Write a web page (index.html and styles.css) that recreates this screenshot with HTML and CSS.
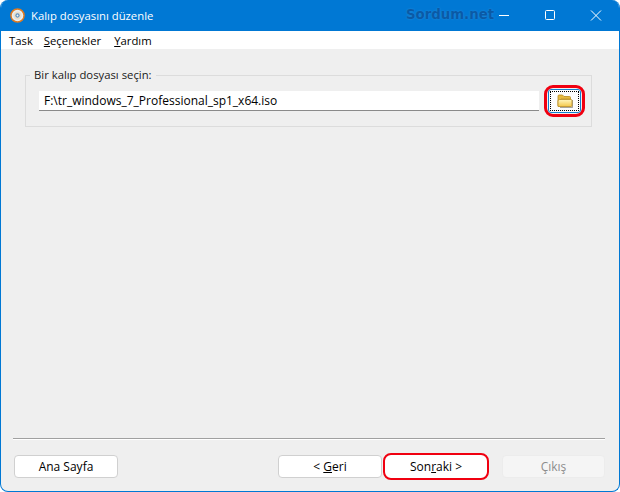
FILE: index.html
```html
<!DOCTYPE html>
<html lang="tr">
<head>
<meta charset="utf-8">
<title>Kalıp dosyasını düzenle</title>
<link rel="stylesheet" href="styles.css">
</head>
<body>
<div class="window">
  <header class="titlebar">
    <svg class="app-icon" width="15" height="15" viewBox="0 0 16 16">
      <circle cx="8" cy="8" r="7" fill="#e8f0f4" stroke="#e07a20" stroke-width="1.6"/>
      <circle cx="8" cy="8" r="4.400" fill="#eadfce"/>
      <circle cx="8" cy="8" r="2.300" fill="#5f93bf"/>
      <circle cx="8" cy="8" r="1" fill="#f3f6f8"/>
    </svg>
    <span class="title">Kalıp dosyasını düzenle</span>
    <span class="watermark">Sordum.net</span>
    <div class="controls">
      <svg class="ctl" width="46" height="31" viewBox="0 0 46 31"><path d="M18 15.500h10" stroke="#fff" fill="none"/></svg>
      <svg class="ctl" width="46" height="31" viewBox="0 0 46 31"><rect x="18.500" y="10.500" width="9" height="9" rx="1" stroke="#fff" fill="none"/></svg>
      <svg class="ctl" width="46" height="31" viewBox="0 0 46 31"><path d="M18 10.500l10 10M28 10.500l-10 10" stroke="#fff" fill="none"/></svg>
    </div>
  </header>
  <nav class="menu">
    <span class="menu-item">Task</span>
    <span class="menu-item menu-options"><u>S</u>eçenekler</span>
    <span class="menu-item"><u>Y</u>ardım</span>
  </nav>
  <main class="content">
    <fieldset class="group">
      <legend class="legend">Bir kalıp dosyası seçin:</legend>
      <div class="path-row">
        <div class="path-input">F:\tr_windows_7_Professional_sp1_x64.iso</div>
        <div class="browse-ring">
          <button class="browse" type="button" aria-label="Gözat">
            <span class="focus-dots">
              <svg width="16" height="14" viewBox="0 0 16 14">
                <defs>
                  <linearGradient id="fold" x1="0" y1="0" x2="0" y2="1">
                    <stop offset="0" stop-color="#fff6bf"/>
                    <stop offset="1" stop-color="#f4c84a"/>
                  </linearGradient>
                </defs>
                <path d="M15.500 6V13.500H3" fill="none" stroke="#6f6a5c" stroke-width="1" opacity=".6"/>
                <path d="M1 11.500V2Q1 1 2 1H5.500L7 2.500H12.500Q13.500 2.500 13.500 3.500V5H4L1 11.500Z" fill="#e6b93f" stroke="#b88a1e" stroke-width=".8"/>
                <path d="M1 12.500V7Q1 5.500 2.500 5.500H14Q15 5.500 15 6.500V11.500Q15 12.500 14 12.500Z" fill="url(#fold)" stroke="#b88a1e" stroke-width=".8"/>
              </svg>
            </span>
          </button>
        </div>
      </div>
    </fieldset>
  </main>
  <footer class="footer">
    <div class="rule"></div>
    <div class="buttons">
      <button class="btn btn-home" type="button">Ana Sayfa</button>
      <div class="btn-right">
        <button class="btn" type="button">&lt; <u>G</u>eri</button>
        <button class="btn btn-next" type="button">Son<u>r</u>aki &gt;</button>
        <button class="btn btn-exit" type="button" disabled>Çıkış</button>
      </div>
    </div>
  </footer>
</div>
</body>
</html>
```
FILE: styles.css
```css
* { box-sizing: border-box; }
html, body { margin: 0; padding: 0; background: #fff; }
body { width: 620px; height: 492px; overflow: hidden; font-family: "Open Sans", "Noto Sans", sans-serif; font-size: 11.300px; color: #000; }
.window { width: 620px; height: 492px; display: flex; flex-direction: column; background: #efefef; border: 1px solid #0078d4; border-top: 0; border-radius: 8px; overflow: hidden; }
.titlebar { height: 31px; flex: none; background: #0078d4; color: #fff; display: flex; align-items: center; padding-left: 9px; position: relative; }
.app-icon { flex: none; }
.title { margin-left: 6px; }
.watermark { position: absolute; left: 405px; top: 6px; font-family: "DejaVu Sans", sans-serif; font-weight: 700; font-size: 13.300px; line-height: 18px; color: #0a5aa6; text-shadow: 0 0 2px #2a8fdc; }
.controls { margin-left: auto; display: flex; }
.ctl { display: block; }
.menu { height: 18px; flex: none; background: #fff; display: flex; align-items: center; padding-left: 8px; gap: 11px; }
.menu-options { margin-right: 2px; }
.content { flex: 1; padding: 18px 27px 0 24px; }
.group { margin: 0; height: 60px; border: 1px solid #dcdcdc; padding: 0 4px 0 13px; min-width: 0; }
.legend { margin-left: -9px; padding: 0 4px; line-height: 16px; color: #1a1a1a; }
.path-row { display: flex; align-items: center; margin-top: 2px; }
.path-input { width: 500px; height: 20px; background: #fff; border-bottom: 1px solid #8a8a8a; padding-left: 5px; line-height: 19px; font-size: 12px; }
.browse-ring { margin-left: 5px; flex: none; width: 41px; height: 32px; border: 3px solid #f00010; border-radius: 9px; padding: 1px; }
.browse { display: block; width: 33px; height: 24px; padding: 1px; background: #fdfdfd; border: 1px solid #0f7fd0; border-radius: 3px; }
.focus-dots { display: flex; width: 100%; height: 100%; align-items: center; justify-content: center; border: 1px dotted #000; }
.footer { flex: none; padding: 0 14px 13px 12px; }
.rule { height: 2px; border-top: 1px solid #a0a0a0; border-bottom: 1px solid #fff; }
.buttons { display: flex; justify-content: space-between; margin-top: 15px; padding-left: 1px; }
.btn-right { display: flex; }
.btn { width: 104px; height: 23px; padding: 0; font-family: inherit; font-size: 12px; color: #000; background: #fff; border: 1px solid #d0d0d0; border-radius: 4px; }
.btn-next { margin-left: 1px; width: 106px; height: 27px; margin-top: -2px; margin-bottom: -2px; border: 2px solid #f00010; border-radius: 8px; }
.btn-exit { margin-left: 13px; width: 103px; background: #f5f5f5; border-color: #ececec; color: #8c8c8c; }
```
